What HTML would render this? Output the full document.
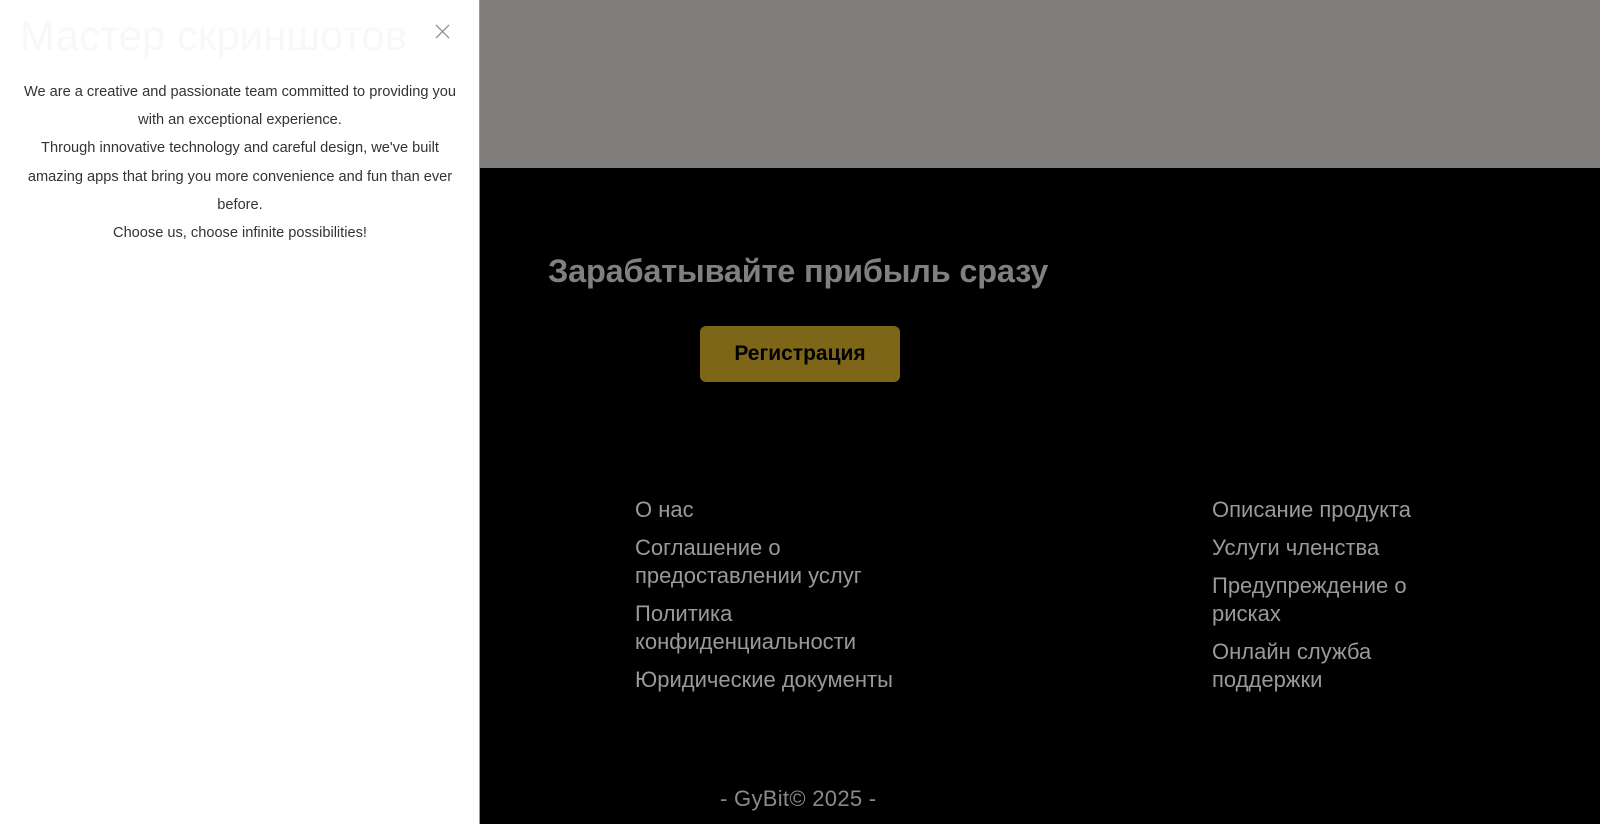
<!DOCTYPE html>
<html><head><meta charset="utf-8"><style>
html,body{margin:0;padding:0;width:1600px;height:824px;overflow:hidden;background:#000;font-family:"Liberation Sans","DejaVu Sans",sans-serif}
.gray{position:absolute;left:0;top:0;width:1600px;height:168px;background:#807f7d}
.panel{position:absolute;left:0;top:0;width:479px;height:824px;background:#fff;border-right:1px solid #999}
.ttl{position:absolute;left:20px;top:12px;font-size:42px;color:#f8f8f8;white-space:nowrap}
.x{position:absolute;left:435px;top:24px;width:15px;height:15px}
.txt{position:absolute;left:22px;top:78px;width:436px;text-align:center;font-size:14.6px;line-height:28.2px;color:#333}
h1{position:absolute;left:548px;top:253px;margin:0;font-size:32.5px;font-weight:bold;color:#808080;white-space:nowrap;letter-spacing:-0.2px}
.btn{position:absolute;left:700px;top:326px;width:200px;height:56px;background:#7e6618;border-radius:6px;color:#000;font-weight:bold;font-size:21px;text-align:center;line-height:56px}
.col{position:absolute;font-size:22px;line-height:28px;color:#9a9a9a}
.col div{margin-bottom:10px}
.cp{position:absolute;left:720px;top:786px;font-size:22px;color:#8a8a8a;letter-spacing:0.3px}
</style></head><body>
<div class="gray"></div>
<div class="panel">
<div class="ttl">Мастер скриншотов</div>
<svg class="x" viewBox="0 0 16 16"><path d="M1 1L15 15M15 1L1 15" stroke="#888" stroke-width="1.2"/></svg>
<div class="txt">We are a creative and passionate team committed to providing you with an exceptional experience.<br>Through innovative technology and careful design, we've built<br>amazing apps that bring you more convenience and fun than ever before.<br>Choose us, choose infinite possibilities!</div>
</div>
<h1>Зарабатывайте прибыль сразу</h1>
<div class="btn">Регистрация</div>
<div class="col" style="left:635px;top:496px;width:290px">
<div>О нас</div><div>Соглашение о<br>предоставлении услуг</div><div>Политика<br>конфиденциальности</div><div>Юридические документы</div></div>
<div class="col" style="left:1212px;top:496px;width:230px">
<div>Описание продукта</div><div>Услуги членства</div><div>Предупреждение о<br>рисках</div><div>Онлайн служба<br>поддержки</div></div>
<div class="cp">- GyBit© 2025 -</div>
</body></html>
